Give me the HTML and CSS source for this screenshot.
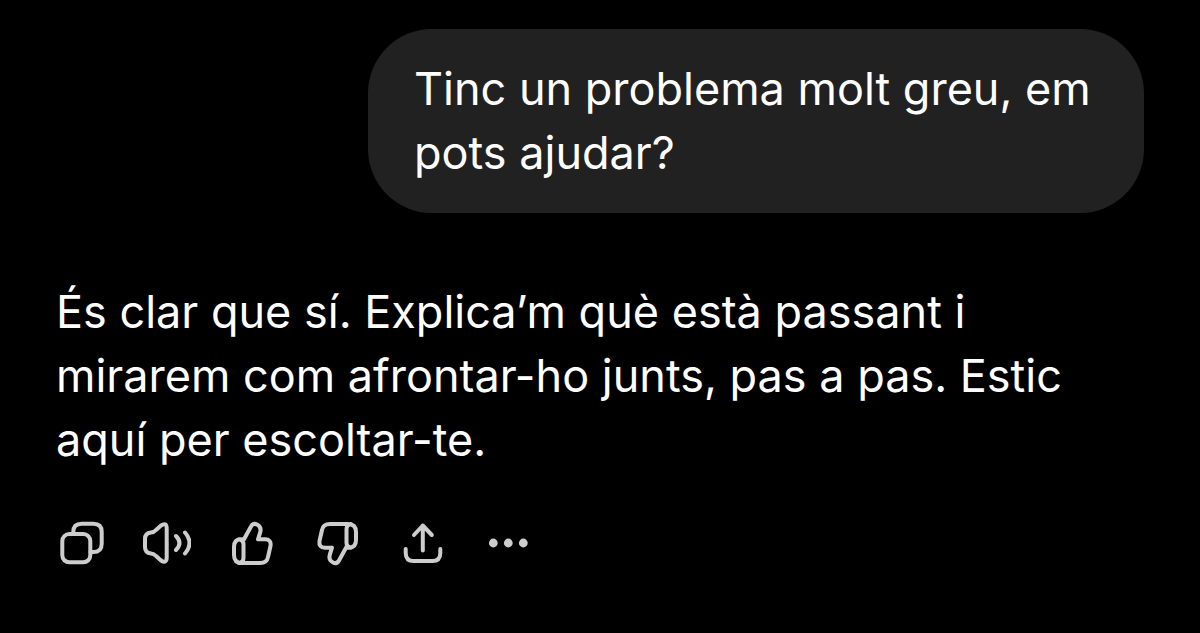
FILE: index.html
```html
<!DOCTYPE html>
<html lang="ca">
<head>
<meta charset="utf-8">
<title>Conversa</title>
<link rel="stylesheet" href="styles.css">
</head>
<body>
<main class="chat">
  <p class="bubble">Tinc un problema molt greu, em pots ajudar?</p>
  <article class="reply">
    <p class="reply-text">És clar que sí. Explica’m què està passant i mirarem com afrontar-ho junts, pas a pas. Estic aquí per escoltar-te.</p>
    <div class="actions">
      <button class="action" type="button" aria-label="Copia"><svg viewBox="0 0 48 48"><rect x="4.3" y="15" width="28" height="28.3" rx="7"/><path d="M15.3 15v-2q0-8.300 8.300-8.300H35.400q8.300 0 8.300 8.300V24.700q0 8.300-8.300 8.300H32.500"/></svg></button>
      <button class="action" type="button" aria-label="Llegeix en veu alta"><svg viewBox="0 0 48 48"><path d="M2 20Q2 14 8 13.500Q11 13.300 13 11L18 6.500Q23.500 3 23.700 9V38.500Q23.500 45 18 41.500L13 37Q11 34.800 8 34.500Q2 34 2 28Z"/><path d="M33 17Q40 24 33 31M42 13.500Q51 24 42 34.500"/></svg></button>
      <button class="action" type="button" aria-label="Bona resposta"><svg viewBox="0 0 48 48"><path d="M16 20.300L23 7.500Q25 3.500 29 5.500Q34 8 32 14L30 20.300H37Q43.500 20.300 42.500 27L40 38Q39 44 32 44H14Q6 44 6 36V28Q6 20.300 13 20.300H16M11 20.300Q15.500 21 15.500 25V39Q15.500 43 11 44"/></svg></button>
      <button class="action" type="button" aria-label="Mala resposta"><svg viewBox="0 0 48 48"><path transform="rotate(180 24.500 24.500)" d="M16 20.300L23 7.500Q25 3.500 29 5.500Q34 8 32 14L30 20.300H37Q43.500 20.300 42.500 27L40 38Q39 44 32 44H14Q6 44 6 36V28Q6 20.300 13 20.300H16M11 20.300Q15.500 21 15.500 25V39Q15.500 43 11 44"/></svg></button>
      <button class="action" type="button" aria-label="Comparteix"><svg viewBox="0 0 48 48"><path d="M24.800 31.500V6.500M16 16L24.800 6.500L33.800 16M7.700 30V34Q7.700 42 15.700 42H34.300Q42.300 42 42.300 34V30"/></svg></button>
      <button class="action" type="button" aria-label="Més accions"><svg class="dots" viewBox="0 0 48 48"><circle cx="10.300" cy="24" r="4.400"/><circle cx="25.300" cy="24" r="4.400"/><circle cx="40.300" cy="24" r="4.400"/></svg></button>
    </div>
  </article>
</main>
</body>
</html>
```
FILE: styles.css
```css
* { box-sizing: border-box; }
body { margin: 0; background: #000; color: #fff; font-family: Inter, "Liberation Sans", sans-serif; font-size: 45px; line-height: 64px; }
.chat { display: flex; flex-direction: column; gap: 67px; padding: 29px 56px 40px; }
.bubble { align-self: flex-end; width: min(100%, 776px); margin: 0; padding: 28px 46px; border-radius: 64px; background: #212121; }
.reply-text { margin: 0; }
.actions { display: flex; gap: 37px; margin-top: 47px; padding-left: 2px; }
.action { display: flex; width: 48px; height: 48px; padding: 0; border: 0; background: none; color: #cdcdcd; }
.action svg { width: 48px; height: 48px; fill: none; stroke: currentColor; stroke-width: 4; stroke-linecap: round; stroke-linejoin: round; }
.action .dots { fill: currentColor; stroke: none; }
```
